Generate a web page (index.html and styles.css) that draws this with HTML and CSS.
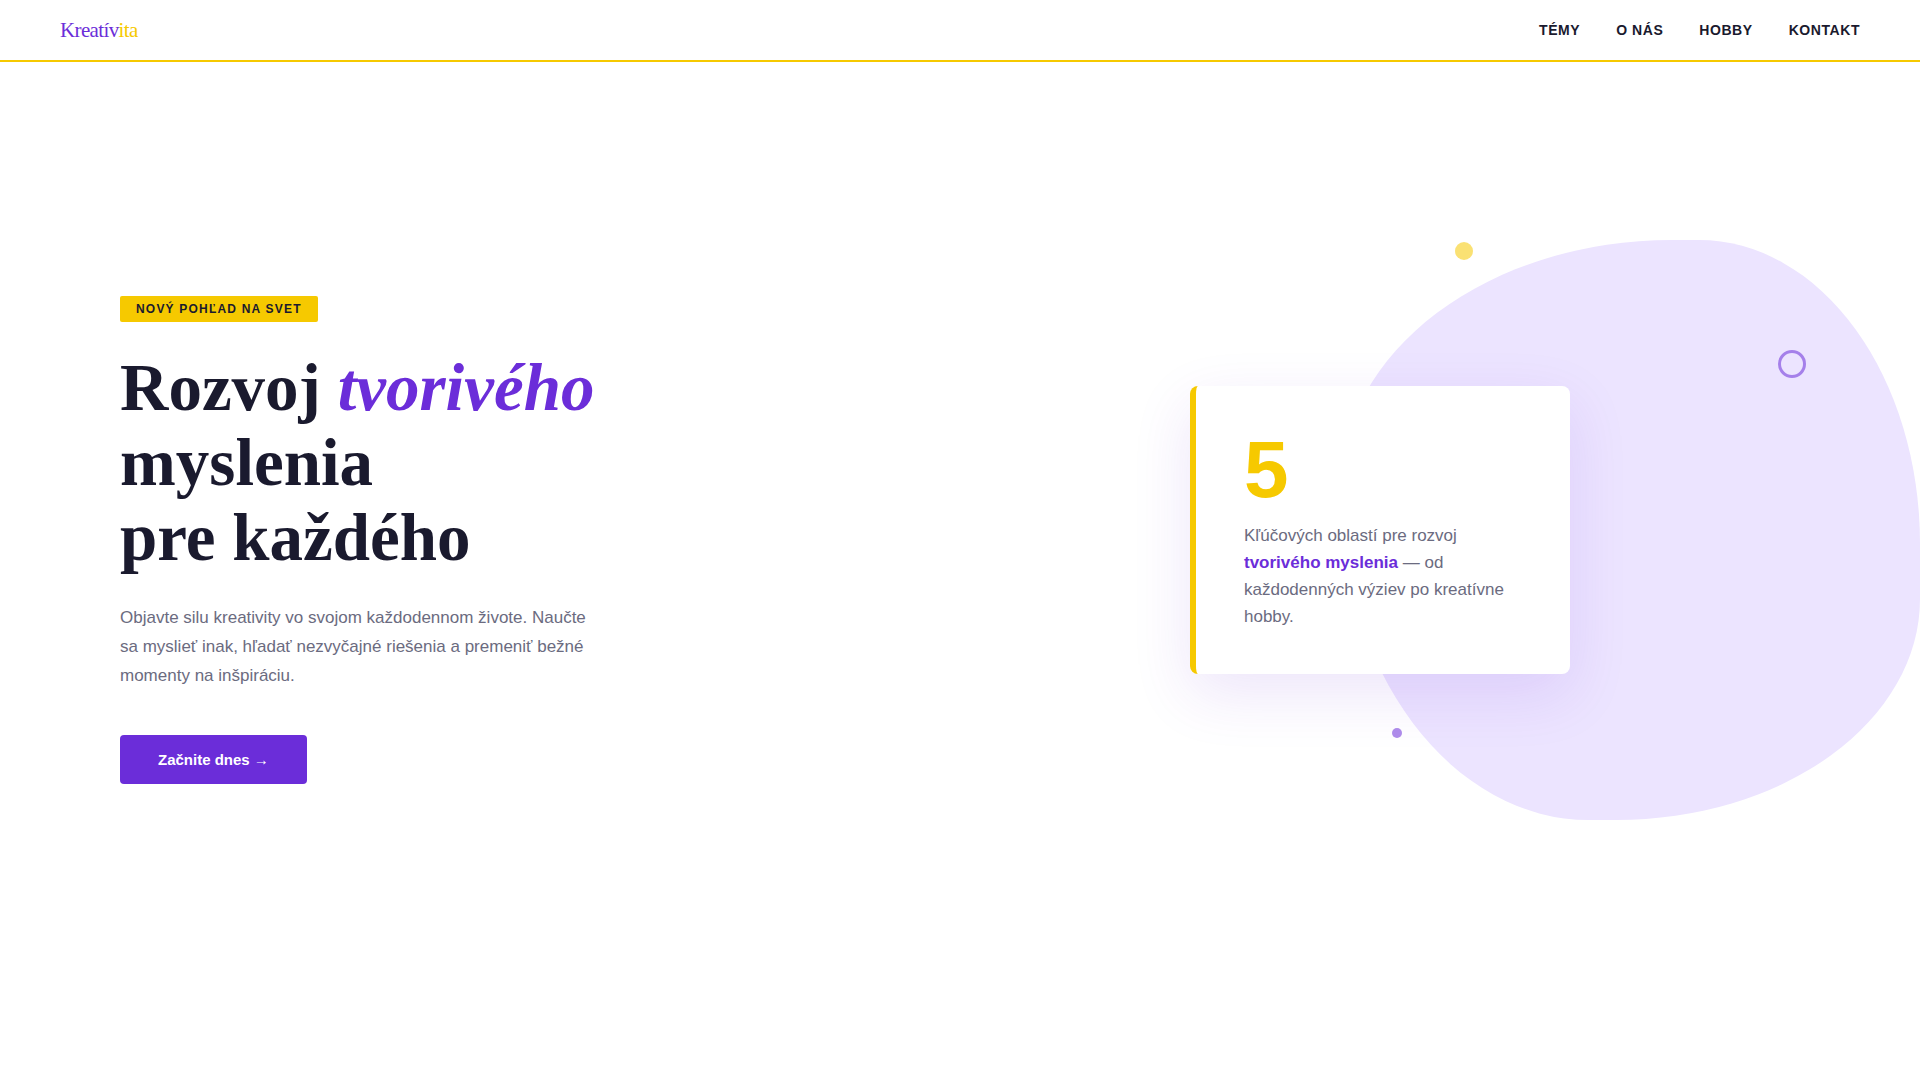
FILE: index.html
```html
<!DOCTYPE html>
<html lang="sk">
<head>
  <meta charset="UTF-8">
  <meta name="viewport" content="width=device-width, initial-scale=1">
  <title>Kreatívita</title>
  <link rel="stylesheet" href="styles.css">
</head>
<body>
  <header class="site-header">
    <a class="logo" href="#">Kreatív<span class="logo-accent">ita</span></a>
    <nav class="site-nav">
      <a href="#temy">Témy</a>
      <a href="#o-nas">O nás</a>
      <a href="#hobby">Hobby</a>
      <a href="#kontakt">Kontakt</a>
    </nav>
  </header>

  <main class="hero">
    <section class="hero-content">
      <span class="tag">Nový pohľad na svet</span>
      <h1 class="hero-title">Rozvoj <em>tvorivého</em><br>myslenia<br>pre každého</h1>
      <p class="hero-text">Objavte silu kreativity vo svojom každodennom živote. Naučte sa myslieť inak, hľadať nezvyčajné riešenia a premeniť bežné momenty na inšpiráciu.</p>
      <button class="cta" type="button">Začnite dnes →</button>
    </section>

    <section class="hero-visual">
      <div class="blob"></div>
      <span class="dot dot-yellow"></span>
      <span class="dot dot-ring"></span>
      <article class="card">
        <div class="card-number">5</div>
        <p class="card-text">Kľúčových oblastí pre rozvoj <strong>tvorivého myslenia</strong> — od každodenných výziev po kreatívne hobby.</p>
      </article>
      <span class="dot dot-purple"></span>
    </section>
  </main>
</body>
</html>
```

FILE: styles.css
```css
:root {
  --purple: #6b2dd9;
  --purple-light: #ece4ff;
  --yellow: #f6c900;
  --ink: #1a1a2e;
  --muted: #6b6b80;
  --header-height: 62px;
  --side: 120px;
}

* {
  box-sizing: border-box;
  margin: 0;
  padding: 0;
}

body {
  min-height: 100vh;
  display: flex;
  flex-direction: column;
  background: #fff;
  color: var(--ink);
  font-family: "Liberation Sans", Arial, sans-serif;
}

.site-header {
  height: var(--header-height);
  padding: 0 60px;
  display: flex;
  align-items: center;
  justify-content: space-between;
  border-bottom: 2px solid var(--yellow);
}

.logo {
  color: var(--purple);
  font-family: "Liberation Serif", "Times New Roman", serif;
  font-size: 21px;
  letter-spacing: -0.03em;
  text-decoration: none;
}

.logo-accent {
  color: var(--yellow);
}

.site-nav {
  display: flex;
  gap: 36px;
}

.site-nav a {
  color: var(--ink);
  font-size: 14px;
  font-weight: 700;
  letter-spacing: 0.04em;
  text-decoration: none;
  text-transform: uppercase;
}

.hero {
  flex: 1;
  display: grid;
  grid-template-columns: 1fr 1fr;
  align-items: center;
  padding: 0 var(--side) var(--header-height);
}

.hero-content {
  display: flex;
  flex-direction: column;
  align-items: flex-start;
}

.tag {
  margin-bottom: 28px;
  padding: 6px 16px;
  border-radius: 2px;
  background: var(--yellow);
  font-size: 12px;
  font-weight: 700;
  line-height: 14px;
  letter-spacing: 0.1em;
  text-transform: uppercase;
}

.hero-title {
  margin-bottom: 28px;
  font-family: "Liberation Serif", "Times New Roman", serif;
  font-size: 67px;
  font-weight: 700;
  line-height: 75px;
}

.hero-title em {
  color: var(--purple);
}

.hero-text {
  max-width: 480px;
  margin-bottom: 45px;
  color: var(--muted);
  font-size: 17px;
  line-height: 29px;
}

.cta {
  padding: 16px 38px;
  border: 0;
  border-radius: 4px;
  background: var(--purple);
  color: #fff;
  font: 700 15px/17px "Liberation Sans", Arial, sans-serif;
  cursor: pointer;
}

.hero-visual {
  position: relative;
  min-height: 580px;
  margin-bottom: 20px;
  display: flex;
  align-items: center;
  justify-content: center;
}

.blob {
  position: absolute;
  top: 0;
  right: calc(var(--side) * -1);
  width: 580px;
  height: 580px;
  border-radius: 60% 40% 55% 45% / 45% 55% 40% 60%;
  background: var(--purple-light);
}

.dot {
  position: absolute;
  border-radius: 50%;
  opacity: 0.55;
}

.dot-yellow {
  top: 2px;
  right: 327px;
  width: 18px;
  height: 18px;
  background: var(--yellow);
}

.dot-ring {
  top: 110px;
  right: -6px;
  width: 28px;
  height: 28px;
  border: 3px solid var(--purple);
}

.dot-purple {
  right: 398px;
  bottom: 82px;
  width: 10px;
  height: 10px;
  background: var(--purple);
}

.card {
  position: relative;
  width: 380px;
  padding: 44px 48px;
  border-left: 6px solid var(--yellow);
  border-radius: 8px;
  background: #fff;
  box-shadow: 0 20px 60px rgba(108, 43, 217, 0.12);
}

.card-number {
  margin-bottom: 12px;
  color: var(--yellow);
  font-size: 80px;
  font-weight: 700;
  line-height: 1;
}

.card-text {
  color: var(--muted);
  font-size: 17px;
  line-height: 27px;
}

.card-text strong {
  color: var(--purple);
}
```
